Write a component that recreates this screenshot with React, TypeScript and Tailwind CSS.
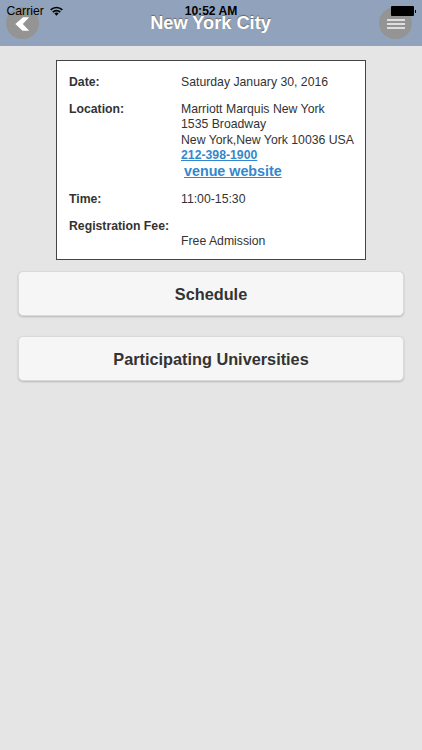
import type { ReactNode } from "react";

function WifiIcon() {
  return (
    <svg width="13" height="10" viewBox="0 0 13 10" fill="none" stroke="#000" strokeWidth="1.7">
      <path d="M0.7 3.9a8.2 8.2 0 0 1 11.6 0" />
      <path d="M2.8 6.2a5.2 5.2 0 0 1 7.4 0" />
      <path d="M6.5 9.7 4.4 7.6a2.9 2.9 0 0 1 4.2 0z" fill="#000" stroke="none" />
    </svg>
  );
}

function StatusBar() {
  return (
    <div className="absolute inset-x-0 top-0 grid h-[22px] grid-cols-3 items-center leading-[22px] text-black">
      <div className="flex items-center gap-[6px] pl-[6.5px]">
        <span className="text-[12.2px]">Carrier</span>
        <WifiIcon />
      </div>
      <span className="whitespace-nowrap text-center text-[12.1px] font-bold">10:52 AM</span>
      <div className="flex items-center justify-end pr-[6px]">
        <span className="h-[10px] w-[23px] rounded-[1px] bg-black" />
        <span className="ml-px h-[3px] w-px bg-black" />
      </div>
    </div>
  );
}

function Header() {
  return (
    <header className="relative flex h-[46px] items-center justify-between bg-[#91a3bc] pl-[6px] pr-[10px]">
      <button className="flex h-[32px] w-[33px] items-center justify-center rounded-full bg-[#949494] pt-[2px]">
        <svg width="15" height="16" viewBox="0 0 15 16" fill="#fff">
          <path d="M8 1.2h6.2L7.8 8l6.4 6.8H7.6L0.3 8z" />
        </svg>
      </button>
      <h1 className="pl-[3px] text-[18.2px] font-bold leading-[44px] text-white [text-shadow:0_-1px_1px_#666]">
        New York City
      </h1>
      <button className="flex h-[32px] w-[33px] flex-col items-center justify-center gap-[2px] rounded-full bg-[#949494] pt-[2px]">
        <span className="h-[2px] w-[18px] bg-[#dedede]" />
        <span className="h-[2px] w-[18px] bg-[#dedede]" />
        <span className="h-[2px] w-[18px] bg-[#dedede]" />
      </button>
      <StatusBar />
    </header>
  );
}

function Row({ label, children }: { label: string; children: ReactNode }) {
  return (
    <>
      <dt className="font-bold">{label}</dt>
      <dd className="whitespace-nowrap">{children}</dd>
    </>
  );
}

function ActionButton({ children }: { children: ReactNode }) {
  return (
    <button className="h-[45px] w-full rounded-[5px] border border-[#dadada] bg-[#f6f6f6] pt-[2px] text-[16.3px] font-bold text-[#333] shadow-[0_1px_2px_rgba(0,0,0,0.2)]">
      {children}
    </button>
  );
}

export default function App() {
  return (
    <div className="min-h-[750px] bg-[#e5e5e5] font-['Liberation_Sans',Arial,sans-serif] text-[#333]">
      <Header />
      <main className="pt-[14px]">
        <dl className="ml-[56px] grid h-[200px] w-[310px] grid-cols-[112px_1fr] grid-rows-[27px_90px_27px_1fr] border border-[#444] bg-white pl-[12px] pt-[14px] text-[12.25px] leading-[15.3px]">
          <Row label="Date:">Saturday January 30, 2016</Row>
          <Row label="Location:">
            Marriott Marquis New York
            <br />
            1535 Broadway
            <br />
            New York,New York 10036 USA
            <br />
            <a href="#" className="block w-fit font-bold leading-[14px] text-[#3388cc] underline">
              212-398-1900
            </a>
            <a href="#" className="ml-[3px] block w-fit text-[14.3px] font-bold leading-[18px] text-[#3388cc] underline">
              venue website
            </a>
          </Row>
          <Row label="Time:">11:00-15:30</Row>
          <Row label="Registration Fee:">
            <span className="block pt-[15px]">Free Admission</span>
          </Row>
        </dl>
        <div className="mt-[11px] flex flex-col gap-[20px] pl-[18px] pr-[18px]">
          <ActionButton>Schedule</ActionButton>
          <ActionButton>Participating Universities</ActionButton>
        </div>
      </main>
    </div>
  );
}
